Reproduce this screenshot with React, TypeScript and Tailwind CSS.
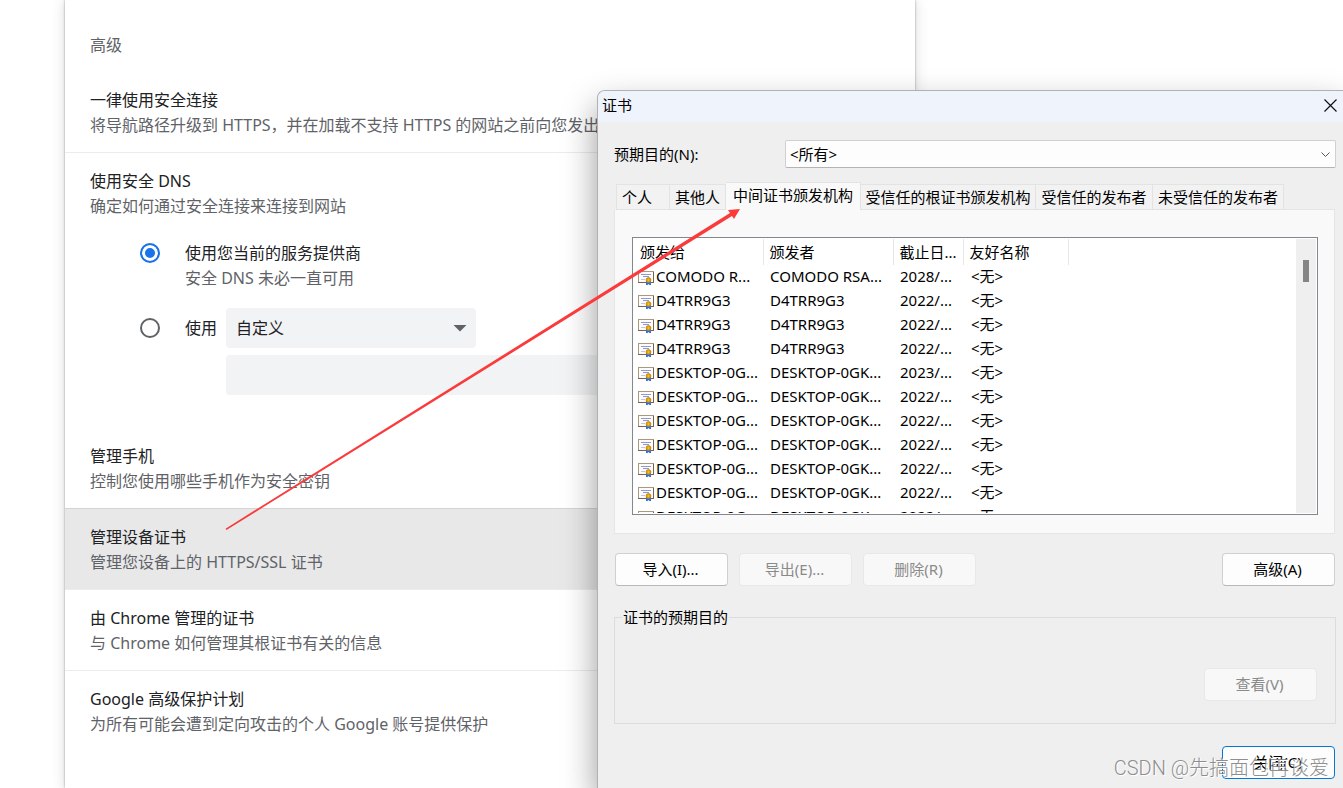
import { useState, type ReactNode } from "react";
import clsx from "clsx";

const tabs = [
  { label: "个人", width: "w-[54px]" },
  { label: "其他人", width: "w-[56px]" },
  { label: "中间证书颁发机构", width: "w-[135px]" },
  { label: "受信任的根证书颁发机构", width: "w-[175px]" },
  { label: "受信任的发布者", width: "w-[117px]" },
  { label: "未受信任的发布者", width: "w-[131px]" },
];

const desktopRow = (date: string) => ({
  to: "DESKTOP-0G...",
  by: "DESKTOP-0GK...",
  date,
});

const certificates = [
  { to: "COMODO R...", by: "COMODO RSA...", date: "2028/..." },
  { to: "D4TRR9G3", by: "D4TRR9G3", date: "2022/..." },
  { to: "D4TRR9G3", by: "D4TRR9G3", date: "2022/..." },
  { to: "D4TRR9G3", by: "D4TRR9G3", date: "2022/..." },
  desktopRow("2023/..."),
  desktopRow("2022/..."),
  desktopRow("2022/..."),
  desktopRow("2022/..."),
  desktopRow("2022/..."),
  desktopRow("2022/..."),
  desktopRow("2022/..."),
];

function CertificateIcon() {
  return (
    <svg width="16" height="14" viewBox="0 0 16 14" className="mt-1 shrink-0">
      <rect x="0.5" y="0.5" width="15" height="11" fill="#fdfcfa" stroke="#a8987f" />
      <path d="M0 11.5h16M15.5 1v11" stroke="#75624c" />
      <path d="M3 3.5h10M5 5.5h6" stroke="#8f98d2" />
      <path d="M3 8.5h4" stroke="#c3c6da" />
      <path d="M8 10v4h1.5l1-1 1 1H13v-4z" fill="#2f6fe0" />
      <circle cx="10.5" cy="9" r="2.5" fill="#dd9f10" stroke="#b07c05" strokeWidth="0.6" />
      <circle cx="10.5" cy="9" r="0.8" fill="#f6cd52" />
    </svg>
  );
}

interface SettingsRowProps {
  title: string;
  description: string;
  divider?: boolean;
  active?: boolean;
  children?: ReactNode;
}

function SettingsRow({ title, description, divider, active, children }: SettingsRowProps) {
  return (
    <section
      className={clsx(
        "border-t px-[25px] pt-4 pb-3.5 leading-[25px]",
        active
          ? "border-[#d4d4d4] bg-[#e8e8e8]"
          : divider
            ? "border-[#ececec]"
            : "border-transparent",
      )}
    >
      <h3 className="whitespace-nowrap text-[#202124]">{title}</h3>
      <p className="whitespace-nowrap text-[#5f6368]">{description}</p>
      {children}
    </section>
  );
}

function DnsOptions() {
  const [mode, setMode] = useState("current");
  const radio =
    "size-5 shrink-0 appearance-none rounded-full border-2 border-[#5f6368] bg-white checked:border-[#1a73e8] checked:bg-[#1a73e8] checked:shadow-[inset_0_0_0_3px_#fff]";

  return (
    <div className="pt-[22px] pb-[18px] pl-[50px]">
      <div className="flex items-start">
        <input
          id="dns-current"
          type="radio"
          name="dns"
          className={clsx(radio, "mt-0.5")}
          checked={mode === "current"}
          onChange={() => setMode("current")}
        />
        <label htmlFor="dns-current" className="ml-[25px]">
          <span className="block text-[#202124]">使用您当前的服务提供商</span>
          <span className="block text-[#5f6368]">安全 DNS 未必一直可用</span>
        </label>
      </div>
      <div className="mt-[17px] flex items-center">
        <input
          id="dns-custom"
          type="radio"
          name="dns"
          className={radio}
          checked={mode === "custom"}
          onChange={() => setMode("custom")}
        />
        <label htmlFor="dns-custom" className="ml-[25px] w-[41px] text-[#202124]">
          使用
        </label>
        <div className="relative">
          <select
            aria-label="服务提供商"
            className="h-10 w-[250px] appearance-none rounded bg-[#f1f3f4] px-2.5 text-[#202124]"
          >
            <option>自定义</option>
          </select>
          <svg
            width="14"
            height="7"
            viewBox="0 0 14 7"
            className="pointer-events-none absolute top-[17px] right-[9px]"
          >
            <path d="M0.5 0h13L7 6.5z" fill="#5f6368" />
          </svg>
        </div>
      </div>
      <input
        aria-label="自定义提供商"
        className="mt-[7px] ml-[86px] block h-10 w-[600px] rounded bg-[#f1f3f4] px-2.5"
      />
    </div>
  );
}

interface DialogButtonProps {
  children: ReactNode;
  disabled?: boolean;
  primary?: boolean;
}

function DialogButton({ children, disabled, primary }: DialogButtonProps) {
  return (
    <button
      type="button"
      disabled={disabled}
      className={clsx(
        "h-[33px] w-[113px] rounded border pr-0.5 pb-0.5",
        disabled && "border-[#e8e8e8] bg-[#f8f8f8] text-[#8a8a8a]",
        primary && "border-[#0078d4] bg-[#fdfdfd]",
        !disabled && !primary && "border-[#d0d0d0] border-b-[#b8b8b8] bg-[#fdfdfd]",
      )}
    >
      {children}
    </button>
  );
}

function CertificateTable() {
  return (
    <div className="flex h-[278px] overflow-hidden border border-[#828790] bg-white p-px">
      <div className="min-w-0 flex-1 overflow-hidden">
        <table className="w-full table-fixed border-collapse text-left whitespace-nowrap">
          <colgroup>
            <col className="w-[129px]" />
            <col className="w-[130px]" />
            <col className="w-[70px]" />
            <col className="w-[105px]" />
            <col />
          </colgroup>
          <thead>
            <tr className="h-[26px]">
              {["颁发给", "颁发者", "截止日...", "友好名称"].map((name) => (
                <th key={name} className="border-r border-[#e5e5e5] p-0 pl-1.5 font-normal">
                  {name}
                </th>
              ))}
              <th className="p-0" />
            </tr>
          </thead>
          <tbody className="leading-[22px]">
            {certificates.map((cert, index) => (
              <tr key={index} className="h-6">
                <td className="p-0 pb-0.5 pl-1">
                  <div className="flex items-center gap-0.5">
                    <CertificateIcon />
                    {cert.to}
                  </div>
                </td>
                <td className="p-0 pb-0.5 pl-[7px]">{cert.by}</td>
                <td className="p-0 pb-0.5 pl-[7px]">{cert.date}</td>
                <td className="p-0 pb-0.5 pl-2">&lt;无&gt;</td>
                <td className="p-0" />
              </tr>
            ))}
          </tbody>
        </table>
      </div>
      <div className="w-5 bg-[#efefef] pt-[21px]">
        <div className="mx-auto h-[22px] w-1.5 bg-[#858585]" />
      </div>
    </div>
  );
}

function CertificateDialog() {
  const [activeTab, setActiveTab] = useState(2);

  return (
    <div
      role="dialog"
      aria-label="证书"
      className="absolute top-[90px] right-0 bottom-0 left-[597px] overflow-hidden rounded-tl-lg border-t border-l border-[#b0b1b3] bg-[#efefef] text-[15px] leading-6 text-black shadow-[0_16px_34px_rgba(0,0,0,0.4)]"
    >
      <header className="flex h-[31px] items-center justify-between bg-[#eff3fb] pr-1.5 pb-[3px] pl-1">
        <h2>证书</h2>
        <button type="button" aria-label="关闭窗口">
          <svg width="13" height="13" viewBox="0 0 13 13">
            <path d="M0.5 0.5l12 12M12.5 0.5l-12 12" stroke="#111" strokeWidth="1.2" />
          </svg>
        </button>
      </header>

      <div className="pt-[18px] pr-[7px] pl-4">
        <div className="flex items-center">
          <label htmlFor="purpose" className="w-[171px] shrink-0">
            预期目的(N):
          </label>
          <div className="relative flex-1">
            <select
              id="purpose"
              className="block h-7 w-full appearance-none rounded-xs border border-[#d0d0d0] border-b-[#b4b4b4] bg-[#fdfdfd] px-1"
            >
              <option>&lt;所有&gt;</option>
            </select>
            <svg
              width="9"
              height="6"
              viewBox="0 0 9 6"
              className="pointer-events-none absolute top-3 right-1.5"
            >
              <path d="M0.5 0.5l4 4 4-4" fill="none" stroke="#555" />
            </svg>
          </div>
        </div>

        <div role="tablist" className="mt-3.5 flex h-7 items-end pl-0.5">
          {tabs.map((tab, index) => (
            <button
              key={tab.label}
              type="button"
              role="tab"
              aria-selected={activeTab === index}
              onClick={() => setActiveTab(index)}
              className={clsx(
                "shrink-0 border-t border-r border-[#e3e3e3] whitespace-nowrap",
                tab.width,
                index === 0 && "border-l pr-3",
                activeTab === index
                  ? "h-7 bg-[#f9f9f9] pb-1"
                  : "h-[26px] border-b bg-[#f2f2f2] pb-px",
              )}
            >
              {tab.label}
            </button>
          ))}
          <div className="mr-px flex-1 self-end border-b border-[#e5e5e5]" />
        </div>
        <div className="mr-px border border-t-0 border-[#e5e5e5] bg-[#f9f9f9] pt-[27px] pr-4 pb-[18px] pl-[17px]">
          <CertificateTable />
        </div>

        <div className="mt-[19px] mr-px flex gap-[11px] pl-px">
          <DialogButton>导入(I)...</DialogButton>
          <DialogButton disabled>导出(E)...</DialogButton>
          <DialogButton disabled>删除(R)</DialogButton>
          <div className="ml-auto">
            <DialogButton>高级(A)</DialogButton>
          </div>
        </div>

        <fieldset className="mt-[19px] border border-[#dcdcdc] pr-[18px] pb-[22px] pl-[7px]">
          <legend className="px-px">证书的预期目的</legend>
          <div className="flex justify-end pt-[39px]">
            <DialogButton disabled>查看(V)</DialogButton>
          </div>
        </fieldset>

        <div className="mt-[22px] mr-px flex justify-end">
          <DialogButton primary>关闭(C)</DialogButton>
        </div>
      </div>
    </div>
  );
}

export default function App() {
  return (
    <div className="relative h-screen overflow-hidden bg-white font-['Noto_Sans','Noto_Sans_CJK_SC',sans-serif]">
      <main className="ml-[65px] h-full max-w-[850px] bg-white text-base shadow-[0_0_2px_rgba(60,64,67,0.5),0_1px_12px_rgba(60,64,67,0.2)]">
        <h2 className="h-[71px] px-[25px] pt-[33px] leading-[25px] text-[#5f6368]">高级</h2>
        <SettingsRow
          title="一律使用安全连接"
          description="将导航路径升级到 HTTPS，并在加载不支持 HTTPS 的网站之前向您发出警告"
        />
        <SettingsRow
          divider
          title="使用安全 DNS"
          description="确定如何通过安全连接来连接到网站"
        >
          <DnsOptions />
        </SettingsRow>
        <SettingsRow title="管理手机" description="控制您使用哪些手机作为安全密钥" />
        <SettingsRow active title="管理设备证书" description="管理您设备上的 HTTPS/SSL 证书" />
        <SettingsRow
          divider
          title="由 Chrome 管理的证书"
          description="与 Chrome 如何管理其根证书有关的信息"
        />
        <SettingsRow
          divider
          title="Google 高级保护计划"
          description="为所有可能会遭到定向攻击的个人 Google 账号提供保护"
        />
      </main>

      <CertificateDialog />

      {/* Annotation arrow from the settings row to the tab */}
      <svg
        width="520"
        height="324"
        viewBox="0 0 520 324"
        className="pointer-events-none absolute top-[207px] left-[225px]"
      >
        <path d="M0.5 321.7L505 6l-2-3 12-1-6 10-2-3L1.5 323z" fill="#fb3b3b" />
      </svg>

      <p className="pointer-events-none absolute right-[14px] bottom-[6px] font-['Roboto','Noto_Sans_CJK_SC',sans-serif] text-xl leading-7 font-light whitespace-nowrap text-[#808080]/90 [text-shadow:1px_1px_0_#fff]">
        CSDN @先搞面包再谈爱
      </p>
    </div>
  );
}
